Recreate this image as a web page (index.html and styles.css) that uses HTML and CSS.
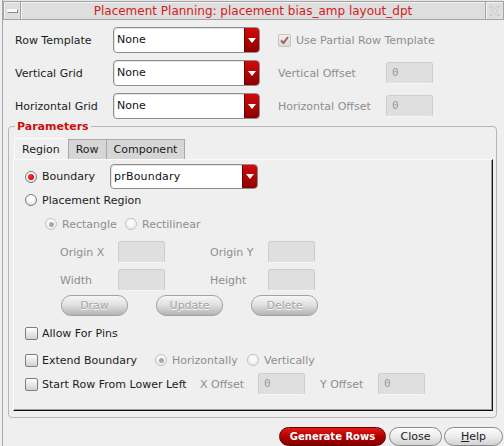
FILE: index.html
```html
<!DOCTYPE html>
<html>
<head>
<meta charset="utf-8">
<link rel="stylesheet" href="styles.css">
</head>
<body>
<div class="window">
  <div class="titlebar">
    <div class="tb-box tb-menu"><span class="minus"></span></div>
    <div class="tb-box tb-title">Placement Planning: placement bias_amp layout_dpt</div>
    <div class="tb-box tb-close">
      <svg width="13" height="12" viewBox="0 0 13 12"><path d="M1.5 1.5h3l2 2.5 2-2.5h3l-3.3 4.5 3.3 4.5h-3l-2-2.5-2 2.5h-3l3.3-4.5z" fill="none" stroke="#c4c4c4" stroke-width="1" stroke-dasharray="2 1"/></svg>
    </div>
  </div>

  <div class="top-grid">
    <div class="lbl">Row Template</div>
    <div class="combo"><span class="combo-text">None</span><span class="combo-arrow"><svg width="8" height="5" viewBox="0 0 8 5"><path d="M0 0h8l-4 5z" fill="#fff"/></svg></span></div>
    <label class="check-opt dis col3"><span class="cbox cbox-dis"><svg width="11" height="11" viewBox="0 0 11 11"><path d="M2 5.5l2.5 2.5 4.5-6" fill="none" stroke="#a85a5a" stroke-width="2"/></svg></span>Use Partial Row Template</label>

    <div class="lbl">Vertical Grid</div>
    <div class="combo"><span class="combo-text">None</span><span class="combo-arrow"><svg width="8" height="5" viewBox="0 0 8 5"><path d="M0 0h8l-4 5z" fill="#fff"/></svg></span></div>
    <div class="lbl dis">Vertical Offset</div>
    <div class="field">0</div>

    <div class="lbl">Horizontal Grid</div>
    <div class="combo"><span class="combo-text">None</span><span class="combo-arrow"><svg width="8" height="5" viewBox="0 0 8 5"><path d="M0 0h8l-4 5z" fill="#fff"/></svg></span></div>
    <div class="lbl dis">Horizontal Offset</div>
    <div class="field">0</div>
  </div>

  <fieldset class="params">
    <legend>Parameters</legend>
    <div class="tabs">
      <div class="tab active">Region</div>
      <div class="tab">Row</div>
      <div class="tab">Component</div>
    </div>
    <div class="panel">
      <div class="prow r-boundary">
        <label class="opt w85"><span class="radio on"></span>Boundary</label>
        <div class="combo combo-b"><span class="combo-text">prBoundary</span><span class="combo-arrow"><svg width="8" height="5" viewBox="0 0 8 5"><path d="M0 0h8l-4 5z" fill="#fff"/></svg></span></div>
      </div>
      <div class="prow r-place">
        <label class="opt"><span class="radio"></span>Placement Region</label>
      </div>
      <div class="prow r-rect">
        <label class="opt dis w80"><span class="radio dis-on"></span>Rectangle</label>
        <label class="opt dis"><span class="radio dis-off"></span>Rectilinear</label>
      </div>
      <div class="prow r-field r-origin">
        <span class="flbl dis">Origin X</span><span class="field"></span>
        <span class="flbl dis gap45">Origin Y</span><span class="field"></span>
      </div>
      <div class="prow r-field r-size">
        <span class="flbl dis">Width</span><span class="field"></span>
        <span class="flbl dis gap45">Height</span><span class="field"></span>
      </div>
      <div class="prow r-btns">
        <button class="pill pill-dis">Draw</button>
        <button class="pill pill-dis">Update</button>
        <button class="pill pill-dis">Delete</button>
      </div>
      <div class="prow r-allow">
        <label class="opt"><span class="cbox"></span>Allow For Pins</label>
      </div>
      <div class="prow r-extend">
        <label class="opt w130"><span class="cbox"></span>Extend Boundary</label>
        <label class="opt dis w92"><span class="radio dis-on"></span>Horizontally</label>
        <label class="opt dis"><span class="radio dis-off"></span>Vertically</label>
      </div>
      <div class="prow r-start">
        <label class="opt w175"><span class="cbox"></span>Start Row From Lower Left</label>
        <span class="flbl dis">X Offset</span><span class="field">0</span>
        <span class="flbl dis gap15">Y Offset</span><span class="field">0</span>
      </div>
    </div>
  </fieldset>

  <div class="footer">
    <button class="pill pill-red">Generate Rows</button>
    <button class="pill pill-norm w53">Close</button>
    <button class="pill pill-norm w59"><u>H</u>elp</button>
  </div>
</div>
</body>
</html>
```

FILE: styles.css
```css
* { box-sizing: border-box; }
html, body { margin: 0; padding: 0; }
body {
  background: #efefef;
  font-family: "DejaVu Sans", sans-serif;
  font-size: 11px;
  color: #1c1c1c;
}
.window {
  margin-left: 2px;
  width: 502px;
  height: 446px;
  overflow: hidden;
  border-left: 1px solid #a6a6a6;
  background: #efefef;
}

/* title bar */
.titlebar {
  display: flex;
  height: 20px;
  padding-top: 1px;
  background: #e6e6e6;
}
.tb-box {
  height: 19px;
  border: 1px solid #a4a4a4;
  background: #dedede;
  box-shadow: inset 1px 1px 0 #f2f2f2;
}
.tb-menu {
  width: 18px;
  display: flex;
  align-items: center;
  justify-content: center;
}
.minus {
  width: 11px;
  height: 4px;
  margin-top: 1px;
  background: #fafafa;
  border: 1px solid #8a8a8a;
  border-top-color: #f8f8f8;
  border-left-color: #f8f8f8;
}
.tb-title {
  flex: 1;
  text-align: center;
  font-size: 12px;
  line-height: 18px;
  color: #d01c1c;
  border-left: 0;
}
.tb-close {
  width: 18px;
  border-left: 0;
  display: flex;
  align-items: center;
  justify-content: center;
}

/* top grid */
.top-grid {
  display: grid;
  grid-template-columns: 98px 147px 108px 47px;
  grid-template-rows: 26px 26px 26px;
  column-gap: 0;
  row-gap: 7px;
  padding: 7px 0 0 12px;
  align-items: center;
}
.top-grid .combo { grid-column: 2; }
.top-grid > :nth-child(3), .top-grid > :nth-child(6), .top-grid > :nth-child(10) { margin-left: 18px; }
.top-grid > :nth-child(3) { grid-column: 3 / span 2; }
.top-grid .field { margin-left: 0; width: 47px; height: 22px; }
.top-grid > :nth-child(6), .top-grid > :nth-child(10) { width: 108px; }
.top-grid > :nth-child(7), .top-grid > :nth-child(11) { margin-left: 18px; }

.lbl { white-space: nowrap; }
.dis { color: #8e8e8e; }

.combo {
  display: flex;
  height: 26px;
  width: 147px;
  border: 1px solid #8e8e8e;
  border-radius: 4px;
  background: #fff;
  overflow: hidden;
  box-shadow: inset 1px 1px 0 #e4e4e4;
}
.combo-text {
  flex: 1;
  padding-left: 3px;
  line-height: 24px;
  color: #111;
}
.combo-arrow {
  width: 15px;
  background: linear-gradient(#d40a0a, #8c0000);
  border-left: 1px solid #700000;
  display: flex;
  align-items: center;
  justify-content: center;
}
.combo-b { width: 148px; height: 25px; }
.combo-b .combo-text { line-height: 23px; letter-spacing: 0.2px; }

.field {
  display: block;
  width: 47px;
  height: 22px;
  border: 1px solid #cdcdcd;
  border-bottom-color: #f6f6f6;
  border-radius: 3px;
  background: #dfdfdf;
  font-family: "DejaVu Sans Mono", monospace;
  font-size: 11px;
  color: #9a9a9a;
  padding-left: 5px;
  line-height: 20px;
}

/* options */
.opt, .check-opt {
  display: flex;
  align-items: center;
  white-space: nowrap;
}
.radio {
  width: 12px;
  height: 12px;
  border-radius: 50%;
  border: 1px solid #7c7c7c;
  background: radial-gradient(circle at 50% 35%, #ffffff 30%, #d4d4d4 100%);
  margin-right: 5px;
  flex: none;
  display: flex;
  align-items: center;
  justify-content: center;
}
.radio.on::after {
  content: "";
  width: 6px;
  height: 6px;
  border-radius: 50%;
  background: radial-gradient(circle at 40% 35%, #ff3030, #b80000);
}
.radio.dis-on, .radio.dis-off {
  border-color: #c2c2c2;
  background: radial-gradient(circle at 50% 35%, #fafafa 30%, #e2e2e2 100%);
}
.radio.dis-on::after {
  content: "";
  width: 5px;
  height: 5px;
  border-radius: 50%;
  background: #a8a8a8;
}
.cbox {
  width: 13px;
  height: 13px;
  border: 1px solid #7e7e7e;
  border-radius: 2px;
  background: linear-gradient(#fefefe, #d2d2d2);
  margin-right: 4px;
  flex: none;
  display: flex;
  align-items: center;
  justify-content: center;
}
.cbox-dis {
  border-color: #c4c4c4;
  background: linear-gradient(#f0f0f0, #dadada);
  margin-right: 5px;
}

/* fieldset */
.params {
  margin: 1px 7px 0 5px;
  padding: 5px 3px 6px 4px;
  border: 1px solid #b6b6b6;
  border-radius: 4px;
  min-width: 0;
}
.params legend {
  font-weight: bold;
  color: #cc1010;
  font-size: 11px;
  line-height: 13px;
  padding: 0 2px;
  margin-left: 2px;
}

.tabs {
  display: flex;
  height: 21px;
  align-items: flex-end;
}
.tab {
  height: 20px;
  padding: 0 7px;
  line-height: 19px;
  border: 1px solid #a8a8a8;
  border-bottom: 0;
  background: #d6d6d6;
  margin-left: -1px;
  color: #1c1c1c;
}
.tab.active {
  height: 21px;
  margin-left: 1px;
  padding: 0 8px 0 7px;
  line-height: 21px;
  background: #efefef;
  border-color: #fbfbfb;
  border-right-color: #a8a8a8;
}
.tab.active + .tab { margin-left: -1px; }

.panel {
  height: 252px;
  border-left: 1px solid #fbfbfb;
  border-top: 1px solid #fbfbfb;
  border-right: 1px solid #111;
  border-bottom: 1px solid #111;
  box-shadow: inset -1px -1px 0 #a0a0a0;
  padding: 4px 0 0 11px;
  display: flex;
  flex-direction: column;
}
.prow {
  display: flex;
  align-items: center;
  flex: none;
}
.r-boundary { height: 25px; }
.r-place { height: 18px; margin-top: 2px; }
.r-rect { height: 18px; margin-top: 6px; padding-left: 20px; }
.r-field { height: 22px; padding-left: 35px; }
.r-origin { margin-top: 8px; }
.r-size { margin-top: 6px; }
.r-btns { height: 21px; margin-top: 4px; padding-left: 36px; gap: 28px; }
.r-allow { height: 19px; margin-top: 8px; }
.r-extend { height: 18px; margin-top: 8px; }
.r-start { height: 22px; margin-top: 4px; }

.w85 { width: 85px; }
.w80 { width: 80px; }
.w130 { width: 130px; }
.w92 { width: 92px; }
.w175 { width: 175px; }
.flbl { width: 58px; white-space: nowrap; }
.gap45 { margin-left: 45px; }
.gap15 { margin-left: 15px; }

/* buttons */
.pill {
  font-family: "DejaVu Sans", sans-serif;
  font-size: 11px;
  border-radius: 10px;
  padding: 0;
  height: 21px;
  cursor: default;
}
.pill-dis {
  width: 67px;
  border: 1px solid #a2a2a2;
  background: linear-gradient(#f6f6f6, #e2e2e2 45%, #b4b4b4);
  color: #a4a4a4;
  text-shadow: 0 1px 0 #ffffff;
}
.footer {
  display: flex;
  justify-content: flex-end;
  margin-top: 9px;
  padding-right: 1px;
  gap: 3px;
}
.footer .pill { height: 19px; line-height: 17px; }
.pill-red {
  width: 107px;
  border: 1px solid #6a0000;
  background: linear-gradient(#e41a1a, #b00000 50%, #860000);
  color: #fff;
  font-weight: bold;
  font-size: 10px;
}
.pill-norm {
  border: 1px solid #8a8a8a;
  background: linear-gradient(#fcfcfc, #ececec 50%, #d2d2d2);
  color: #1c1c1c;
}
.w53 { width: 53px; }
.w59 { width: 59px; margin-left: -1px; }
```
